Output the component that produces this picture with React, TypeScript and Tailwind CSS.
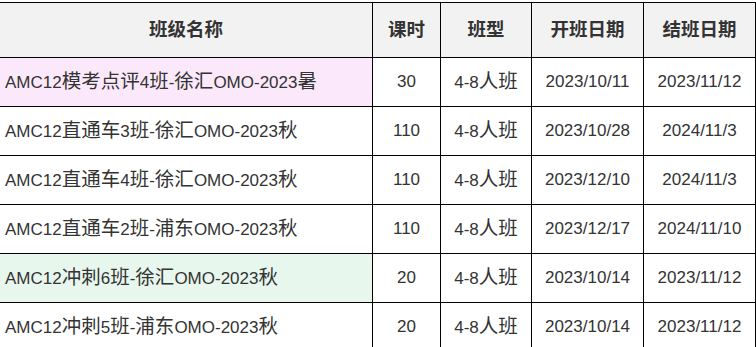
const rows = [
  { name: "AMC12模考点评4班-徐汇OMO-2023暑", hours: "30", type: "4-8人班", start: "2023/10/11", end: "2023/11/12", bg: "bg-[#fbe9fb]" },
  { name: "AMC12直通车3班-徐汇OMO-2023秋", hours: "110", type: "4-8人班", start: "2023/10/28", end: "2024/11/3", bg: "bg-white" },
  { name: "AMC12直通车4班-徐汇OMO-2023秋", hours: "110", type: "4-8人班", start: "2023/12/10", end: "2024/11/3", bg: "bg-white" },
  { name: "AMC12直通车2班-浦东OMO-2023秋", hours: "110", type: "4-8人班", start: "2023/12/17", end: "2024/11/10", bg: "bg-white" },
  { name: "AMC12冲刺6班-徐汇OMO-2023秋", hours: "20", type: "4-8人班", start: "2023/10/14", end: "2023/11/12", bg: "bg-[#e8f7ee]" },
  { name: "AMC12冲刺5班-浦东OMO-2023秋", hours: "20", type: "4-8人班", start: "2023/10/14", end: "2023/11/12", bg: "bg-white" },
];

const cols = "grid grid-cols-[373px_68px_91px_112px_112px]";

// CJK glyphs in the source render a bit larger than the latin ones
function Mixed({ text }: { text: string }) {
  return (
    <span>
      {text.split(/([\u3400-\u9fff]+)/).map((part, i) =>
        /[\u3400-\u9fff]/.test(part) ? (
          <span key={i} className="text-[19.5px]">{part}</span>
        ) : (
          part
        )
      )}
    </span>
  );
}

export default function App() {
  return (
    <div
      className="w-[756px] h-[347px] overflow-hidden bg-white pt-[2px] text-[#333]"
      style={{ fontFamily: '"Liberation Sans", "Noto Sans CJK SC", sans-serif' }}
    >
      {/* Header */}
      <div className={`${cols} border-t border-black bg-[#f2f2f2] text-[18.5px] font-bold`}>
        {["班级名称", "课时", "班型", "开班日期", "结班日期"].map((h) => (
          <div key={h} className="h-[55px] flex items-center justify-center border-r border-b border-black">
            {h}
          </div>
        ))}
      </div>

      {/* Rows */}
      {rows.map((r) => (
        <div key={r.name} className={`${cols} text-[17px]`}>
          <div className={`h-[49px] flex items-center pl-[5px] border-r border-b border-black ${r.bg}`}>
            <Mixed text={r.name} />
          </div>
          <div className="h-[49px] flex items-center justify-center border-r border-b border-black">{r.hours}</div>
          <div className="h-[49px] flex items-center justify-center border-r border-b border-black">
            <Mixed text={r.type} />
          </div>
          <div className="h-[49px] flex items-center justify-center border-r border-b border-black">{r.start}</div>
          <div className="h-[49px] flex items-center justify-center border-r border-b border-black">{r.end}</div>
        </div>
      ))}
    </div>
  );
}
